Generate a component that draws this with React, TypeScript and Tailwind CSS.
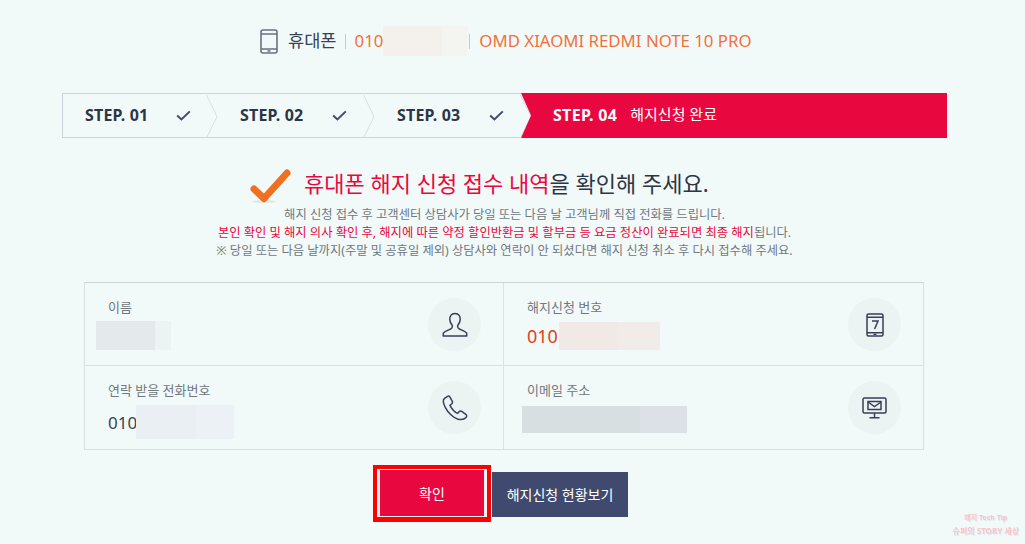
import { ReactNode } from 'react';

const FONT = "font-['Noto_Sans','Noto_Sans_CJK_KR',sans-serif]";

function Chevron() {
  return (
    <svg className="absolute right-[-11px] top-0 h-[45px] w-[12px]" viewBox="0 0 12 45" fill="none">
      <path d="M0.5 1 L11 22.5 L0.5 44" stroke="#d5dfe2" strokeWidth="1" />
    </svg>
  );
}

function StepCheck() {
  return (
    <svg width="15" height="11" viewBox="0 0 15 11" fill="none">
      <path d="M1.2 5.6 L5.4 9.4 L13.8 1.4" stroke="#3f4a6e" strokeWidth="2" />
    </svg>
  );
}

function Step({ label, width, pad, gap }: { label: string; width: string; pad: string; gap: string }) {
  return (
    <div className={`relative flex h-full items-center ${width} ${pad}`}>
      <span className="mb-[2px] text-[16px] font-bold tracking-[0.2px] text-[#2c3546]">{label}</span>
      <span className={gap}>
        <StepCheck />
      </span>
      <Chevron />
    </div>
  );
}

function Circle({ children }: { children: ReactNode }) {
  return (
    <div className="flex h-[53px] w-[53px] shrink-0 items-center justify-center rounded-full bg-[#ebf3f3]">
      {children}
    </div>
  );
}

function UserIcon() {
  return (
    <svg width="26" height="26" viewBox="0 0 26 26" fill="none" stroke="#3a3f58" strokeWidth="1.5" strokeLinejoin="round">
      <path d="M13 1.5 C9 1.5 7.6 4.4 7.8 7.6 C8 10.6 9.4 12.6 10.4 13.8 C10.6 15.4 10.2 16.2 8.6 17 C6.4 18 2.6 19.4 1.4 21 L1.2 24 L24.8 24 L24.6 21 C23.4 19.4 19.6 18 17.4 17 C15.8 16.2 15.4 15.4 15.6 13.8 C16.6 12.6 18 10.6 18.2 7.6 C18.4 4.4 17 1.5 13 1.5 Z" />
    </svg>
  );
}

function PhoneIcon() {
  return (
    <svg width="26" height="26" viewBox="0 0 26 26" fill="none" stroke="#3a3f58" strokeWidth="1.5" strokeLinejoin="round">
      <path d="M5.6 1.4 L2.6 3.4 C0.8 4.8 1.2 8.6 3.4 12.6 C6 17.6 11.2 23 16 24.2 C19.4 25 22.4 24.4 24 22.6 C25 21.4 24.8 20 23.8 19.4 L19.8 16.4 C18.8 15.8 17.8 16 17 16.8 L15.6 18.4 C13.4 17.8 9.4 13.8 8 10.4 L9.8 8.8 C10.6 8 10.8 7.2 10.2 6.2 L7.8 1.8 C7.2 1 6.4 0.9 5.6 1.4 Z" />
    </svg>
  );
}

function TabletIcon() {
  return (
    <svg width="18" height="24" viewBox="0 0 18 24" fill="none" stroke="#3a3f58" strokeWidth="1.5">
      <rect x="1" y="1" width="16" height="22" rx="1.5" />
      <path d="M1 4.2 H17 M1 19.8 H17" />
      <path d="M7.5 21.4 H10.5" strokeWidth="1.4" />
      <path d="M6 8 H12 L8.6 16" strokeWidth="1.5" />
    </svg>
  );
}

function MonitorIcon() {
  return (
    <svg width="25" height="22" viewBox="0 0 25 22" fill="none" stroke="#3a3f58" strokeWidth="1.5">
      <rect x="1" y="1" width="23" height="15" rx="1.5" />
      <rect x="6" y="4.5" width="13" height="8" />
      <path d="M6 5 L12.5 9.5 L19 5" />
      <path d="M12.5 16 V20.5 M7.5 20.8 H17.5" />
    </svg>
  );
}

export default function App() {
  return (
    <div className={`${FONT} relative flex h-[544px] w-[1025px] flex-col overflow-hidden bg-[#f2faf9]`}>
      {/* 상단 기기 정보 */}
      <div className="mt-[26px] flex h-[30px] items-center pl-[260px]">
        <svg width="18" height="25" viewBox="0 0 18 25" fill="none" stroke="#6b7280" strokeWidth="1.6">
          <rect x="1" y="1" width="16" height="23" rx="2" />
          <path d="M1 5 H17 M1 20 H17" />
          <path d="M7.5 22 H10.5" />
        </svg>
        <span className="ml-[10px] text-[17.6px] leading-none text-[#3a4252]">휴대폰</span>
        <span className="ml-[8px] h-[15px] w-px bg-[#c5ccd0]" />
        <span className="ml-[9px] text-[16.8px] leading-none text-[#f2703a]">010</span>
        <span className="h-[30px] w-[59px] bg-[#f4f0ec]" />
        <span className="h-[30px] w-[26px] bg-[#f4f4f1]" />
        <span className="ml-[1px] h-[15px] w-px bg-[#c5ccd0]" />
        <span className="ml-[9px] text-[16.8px] leading-none text-[#f2703a]">OMD XIAOMI REDMI NOTE 10 PRO</span>
      </div>

      {/* 단계 표시 */}
      <div className="mx-[62px] mt-[37px] flex h-[45px] w-[885px]">
        <div className="flex h-full border-y border-l border-[#c9d5d9]">
          <Step label="STEP. 01" width="w-[144px]" pad="pl-[22px]" gap="ml-[28px]" />
          <Step label="STEP. 02" width="w-[157px]" pad="pl-[33px]" gap="ml-[29px]" />
          <Step label="STEP. 03" width="w-[157px]" pad="pl-[33px]" gap="ml-[29px]" />
        </div>
        <div className="flex h-full flex-1 items-center bg-[#e8083f] pl-[32px] text-white [clip-path:polygon(0_0,100%_0,100%_100%,0_100%,10px_50%)]">
          <span className="mb-[2px] text-[16px] font-bold tracking-[0.3px]">STEP. 04</span>
          <span className="mb-[2px] ml-[13px] text-[15px]">해지신청 완료</span>
        </div>
      </div>

      {/* 안내 문구 */}
      <div className="mt-[27px] flex h-[36px] items-center pl-[250px]">
        <svg width="42" height="40" viewBox="0 0 42 40" fill="none">
          <ellipse cx="14" cy="38.5" rx="12" ry="1.5" fill="#dfe6e6" />
          <path d="M4 26 L14 35.5 L37 10" stroke="#f0701f" strokeWidth="7" strokeLinecap="round" strokeLinejoin="round" />
        </svg>
        <h1 className="ml-[12px] text-[22px] font-normal leading-none text-[#2c3546]">
          <span className="text-[#e8083f]">휴대폰 해지 신청 접수 내역</span>을 확인해 주세요.
        </h1>
      </div>
      <div className="mt-[5px] flex flex-col items-center pr-[16px] text-[12.3px] leading-[18px] text-[#6f7780]">
        <p>해지 신청 접수 후 고객센터 상담사가 당일 또는 다음 날 고객님께 직접 전화를 드립니다.</p>
        <p>
          <span className="text-[#e8083f]">본인 확인 및 해지 의사 확인 후, 해지에 따른 약정 할인반환금 및 할부금 등 요금 정산이 완료되면 최종 해지</span>됩니다.
        </p>
        <p>※ 당일 또는 다음 날까지(주말 및 공휴일 제외) 상담사와 연락이 안 되셨다면 해지 신청 취소 후 다시 접수해 주세요.</p>
      </div>

      {/* 접수 내역 */}
      <div className="mx-[84px] mt-[22px] grid h-[168px] w-[840px] grid-cols-[419px_419px] grid-rows-[83px_1fr] border border-[#d5e0e2] border-t-[#c9d5d9]">
        <div className="flex items-start justify-between border-r border-b border-[#d9e3e5] pt-[15px] pl-[23px] pr-[22px]">
          <div className="-mt-[1px]">
            <div className="text-[13px] leading-[20px] text-[#6f7780]">이름</div>
            <div className="mt-[4px] -ml-[12px] flex h-[29px]">
              <span className="w-[59px] bg-[#e4eaec]" />
              <span className="w-[16px] bg-[#ecf3f3]" />
            </div>
          </div>
          <Circle>
            <UserIcon />
          </Circle>
        </div>
        <div className="flex items-start justify-between border-b border-[#d9e3e5] pt-[15px] pl-[23px] pr-[22px]">
          <div className="-mt-[1px]">
            <div className="text-[13px] leading-[20px] text-[#6f7780]">해지신청 번호</div>
            <div className="mt-[5px] flex h-[28px] items-center">
              <span className="text-[18px] leading-none text-[#e2401a]">010</span>
              <span className="ml-[1px] h-full w-[59px] bg-[#f1e9e6]" />
              <span className="h-full w-[42px] bg-[#f1ecea]" />
            </div>
          </div>
          <Circle>
            <TabletIcon />
          </Circle>
        </div>
        <div className="flex items-start justify-between border-r border-[#d9e3e5] pt-[15px] pl-[23px] pr-[22px]">
          <div className="-mt-[1px]">
            <div className="text-[13px] leading-[20px] text-[#6f7780]">연락 받을 전화번호</div>
            <div className="mt-[5px] flex h-[34px] items-center">
              <span className="text-[17px] leading-none text-[#3a4252]">010</span>
              <span className="ml-[-1px] h-full w-[60px] bg-[#e9eff2]" />
              <span className="h-full w-[38px] bg-[#ebf1f4]" />
            </div>
          </div>
          <Circle>
            <PhoneIcon />
          </Circle>
        </div>
        <div className="flex items-start justify-between pt-[15px] pl-[23px] pr-[22px]">
          <div className="-mt-[1px]">
            <div className="text-[13px] leading-[20px] text-[#6f7780]">이메일 주소</div>
            <div className="mt-[6px] -ml-[5px] flex h-[27px]">
              <span className="w-[118px] bg-[#d7dfe1]" />
              <span className="w-[47px] bg-[#dbe1e6]" />
            </div>
          </div>
          <Circle>
            <MonitorIcon />
          </Circle>
        </div>
      </div>

      {/* 버튼 */}
      <div className="mt-[15px] flex items-start pl-[373px]">
        <div className="flex h-[57px] w-[118px] border-[4px] border-b-[5px] border-[#ff0000] bg-[#f2f2f2] px-[3px] py-[1px]">
          <button className="h-full w-full bg-[#e8083f] text-[14px] text-white">확인</button>
        </div>
        <button className="mt-[7px] ml-[1px] h-[45px] w-[136px] bg-[#3f4a6e] text-[14px] text-white">해지신청 현황보기</button>
      </div>

      {/* 워터마크 */}
      <div className="absolute right-[6px] bottom-[7px] flex flex-col items-center font-bold leading-[13px] text-[#f8c4cb] blur-[0.6px] [text-shadow:1px_1px_0_#e3e8ec]">
        <span className="text-[7px]">해지 Tech Tip</span>
        <span className="text-[8px]">슈퍼의 STORY 세상</span>
      </div>
    </div>
  );
}
